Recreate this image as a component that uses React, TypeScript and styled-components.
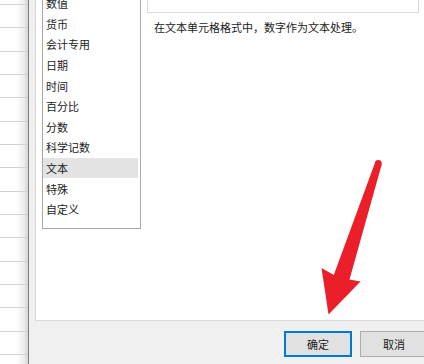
import React from "react";
import styled, { createGlobalStyle } from "styled-components";

const Global = createGlobalStyle`
  html, body { margin: 0; padding: 0; background: #ffffff; }
  body { font-family: "Noto Sans CJK SC", "Noto Sans", sans-serif; }
  * { box-sizing: border-box; }
`;

const Root = styled.div`
  position: relative;
  width: 424px;
  height: 364px;
  overflow: hidden;
  display: flex;
  background: #ffffff;
`;

const Sheet = styled.div`
  width: 28px;
  flex: none;
  display: flex;
  flex-direction: column;
  padding-top: 4px;
  background: linear-gradient(to right, #ffffff 0px, #ffffff 16px, #ececec 24px, #d6d6d6 28px);
`;

const SheetRow = styled.div`
  height: 23.35px;
  flex: none;
  border-top: 1px solid #d2d2d2;
`;

const Dialog = styled.div`
  flex: 1;
  display: flex;
  flex-direction: column;
  background: #f0f0f0;
  border-left: 1px solid #7d7d7d;
`;

const Body = styled.div`
  height: 321px;
  flex: none;
  padding-left: 6px;
  display: flex;
`;

const Panel = styled.div`
  flex: 1;
  background: #ffffff;
  border-left: 1px solid #dadada;
  border-bottom: 1px solid #dadada;
  display: flex;
  align-items: flex-start;
  padding-left: 6px;
`;

const ListBox = styled.div`
  width: 99px;
  height: 237px;
  margin-top: -8px;
  flex: none;
  border: 1px solid #a8a8a8;
  padding-right: 2px;
  display: flex;
  flex-direction: column;
`;

const Item = styled.div<{ $active?: boolean }>`
  height: 20.6px;
  flex: none;
  display: flex;
  align-items: center;
  padding-left: 3px;
  font-size: 11px;
  color: #1a1a1a;
  background: ${(p) => (p.$active ? "#e3e3e3" : "transparent")};
  white-space: nowrap;
`;

const Detail = styled.div`
  flex: 1;
  margin-left: 6px;
  margin-right: 5px;
  display: flex;
  flex-direction: column;
`;

const Preview = styled.div`
  height: 27px;
  margin-top: -14px;
  border: 1px solid #dadada;
  border-top: none;
`;

const Note = styled.div`
  margin-top: 7px;
  padding-left: 7px;
  font-size: 11px;
  line-height: 14px;
  color: #1a1a1a;
  white-space: nowrap;
`;

const Footer = styled.div`
  flex: 1;
  display: flex;
  justify-content: flex-end;
  align-items: flex-start;
  gap: 8px;
  padding-top: 10px;
  margin-right: -4px;
`;

const Button = styled.div<{ $primary?: boolean }>`
  width: 68px;
  height: 26px;
  display: flex;
  align-items: center;
  justify-content: center;
  background: #e1e1e1;
  border: ${(p) => (p.$primary ? "2px solid #0078d7" : "1px solid #adadad")};
  font-size: 11px;
  color: #1a1a1a;
`;

const Arrow = styled.svg`
  position: absolute;
  left: 0;
  top: 0;
  width: 424px;
  height: 364px;
  pointer-events: none;
`;

const items = ["数值", "货币", "会计专用", "日期", "时间", "百分比", "分数", "科学记数", "文本", "特殊", "自定义"];

export default function App() {
  return (
    <Root>
      <Global />
      <Sheet>
        {Array.from({ length: 16 }).map((_, i) => (
          <SheetRow key={i} />
        ))}
      </Sheet>
      <Dialog>
        <Body>
          <Panel>
            <ListBox>
              {items.map((t) => (
                <Item key={t} $active={t === "文本"}>
                  {t}
                </Item>
              ))}
            </ListBox>
            <Detail>
              <Preview />
              <Note>在文本单元格格式中，数字作为文本处理。</Note>
            </Detail>
          </Panel>
        </Body>
        <Footer>
          <Button $primary>确定</Button>
          <Button>取消</Button>
        </Footer>
      </Dialog>
      <Arrow viewBox="0 0 424 364">
        <circle cx="378.3" cy="163.5" r="3.4" fill="#ea1f2a" />
        <polygon
          points="374.9,163 381.7,164.5 349.5,279.5 360.5,281.5 328.5,314.5 321.5,268 333.8,275"
          fill="#ea1f2a"
        />
      </Arrow>
    </Root>
  );
}
